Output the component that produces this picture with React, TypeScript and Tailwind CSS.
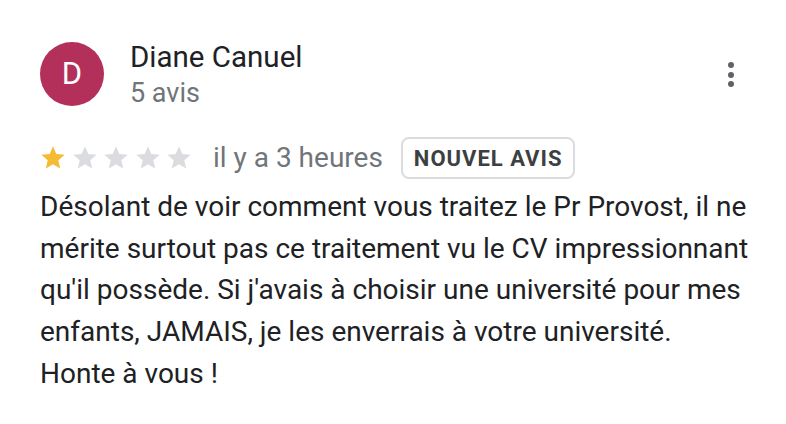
import React from "react";

const Star = ({ filled }: { filled: boolean }) => (
  <svg viewBox="0 0 24 24" className="h-[28px] w-[28px]">
    <path
      d="M12 17.27L18.18 21l-1.64-7.03L22 9.24l-7.19-.61L12 2 9.19 8.63 2 9.24l5.46 4.73L5.82 21z"
      fill={filled ? "#f6bb32" : "#dadce0"}
    />
  </svg>
);

const App = () => {
  return (
    <div className="min-h-screen w-full bg-white font-['Roboto',sans-serif]">
      <div className="relative pl-[40px] pr-[30px] pt-[40px]">
        <div className="flex items-start">
          <div className="mt-[2px] flex h-[64px] w-[64px] shrink-0 items-center justify-center rounded-full bg-[#b3305a] text-[31px] text-white">
            D
          </div>
          <div className="ml-[26px]">
            <div className="text-[29.5px] leading-[34px] text-[#202124]">Diane Canuel</div>
            <div className="mt-[4px] text-[27px] leading-[30px] text-[#70757a]">5 avis</div>
          </div>
          <button className="ml-auto mr-[22px] mt-[22px] flex flex-col items-center gap-[3.5px]">
            <span className="h-[6px] w-[6px] rounded-full bg-[#5f6368]" />
            <span className="h-[6px] w-[6px] rounded-full bg-[#5f6368]" />
            <span className="h-[6px] w-[6px] rounded-full bg-[#5f6368]" />
          </button>
        </div>

        <div className="mt-[29px] flex items-center">
          <div className="-ml-[1px] flex gap-[3.5px]">
            {[true, false, false, false, false].map((f, i) => (
              <Star key={i} filled={f} />
            ))}
          </div>
          <span className="ml-[20px] text-[28px] leading-[32px] text-[#70757a]">il y a 3 heures</span>
          <span className="ml-[18px] flex h-[42px] items-center rounded-[8px] border-2 border-[#dadce0] px-[11px] text-[22px] font-bold tracking-[1px] text-[#3c4043]">
            NOUVEL AVIS
          </span>
        </div>

        <p className="mt-[7px] text-[28px] leading-[41.7px] text-[#202124]">
          Désolant de voir comment vous traitez le Pr Provost, il ne
          <br />
          mérite surtout pas ce traitement vu le CV impressionnant
          <br />
          qu'il possède. Si j'avais à choisir une université pour mes
          <br />
          enfants, JAMAIS, je les enverrais à votre université.
          <br />
          Honte à vous !
        </p>
      </div>
    </div>
  );
};

export default App;
